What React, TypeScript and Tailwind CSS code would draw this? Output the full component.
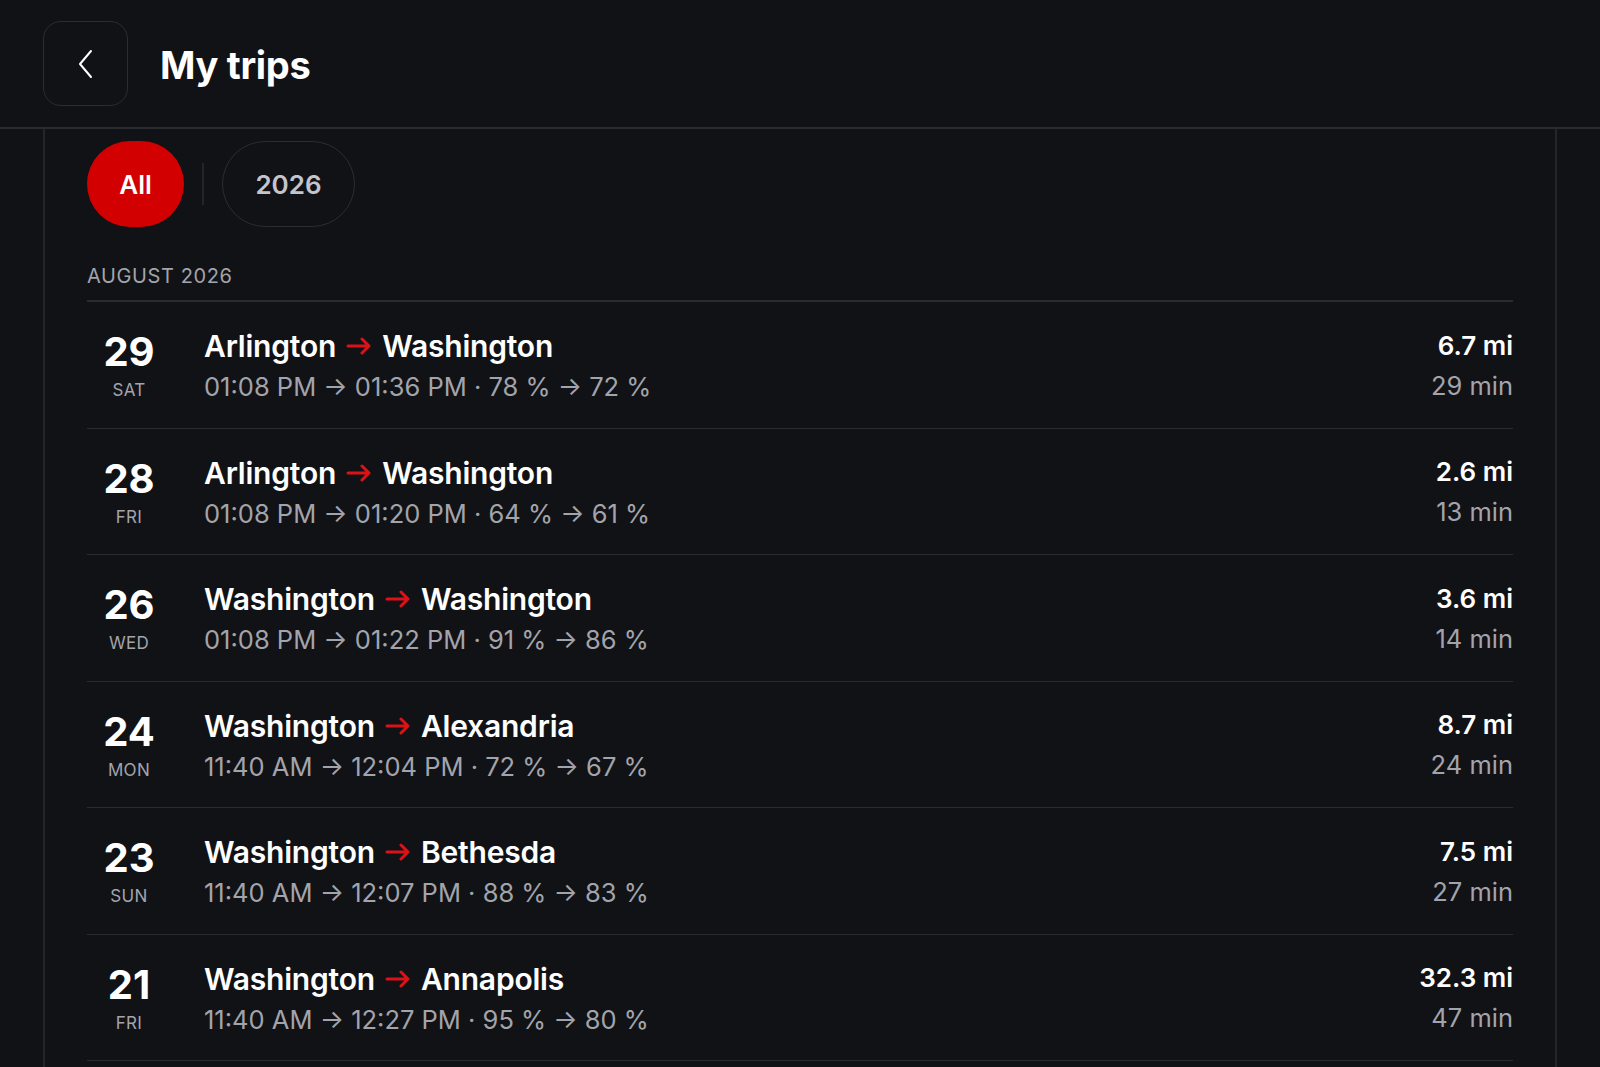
import React from "react";

type Trip = {
  day: string;
  dow: string;
  from: string;
  to: string;
  t1: string;
  t2: string;
  b1: string;
  b2: string;
  dist: string;
  dur: string;
};

const trips: Trip[] = [
  { day: "29", dow: "SAT", from: "Arlington", to: "Washington", t1: "01:08 PM", t2: "01:36 PM", b1: "78 %", b2: "72 %", dist: "6.7 mi", dur: "29 min" },
  { day: "28", dow: "FRI", from: "Arlington", to: "Washington", t1: "01:08 PM", t2: "01:20 PM", b1: "64 %", b2: "61 %", dist: "2.6 mi", dur: "13 min" },
  { day: "26", dow: "WED", from: "Washington", to: "Washington", t1: "01:08 PM", t2: "01:22 PM", b1: "91 %", b2: "86 %", dist: "3.6 mi", dur: "14 min" },
  { day: "24", dow: "MON", from: "Washington", to: "Alexandria", t1: "11:40 AM", t2: "12:04 PM", b1: "72 %", b2: "67 %", dist: "8.7 mi", dur: "24 min" },
  { day: "23", dow: "SUN", from: "Washington", to: "Bethesda", t1: "11:40 AM", t2: "12:07 PM", b1: "88 %", b2: "83 %", dist: "7.5 mi", dur: "27 min" },
  { day: "21", dow: "FRI", from: "Washington", to: "Annapolis", t1: "11:40 AM", t2: "12:27 PM", b1: "95 %", b2: "80 %", dist: "32.3 mi", dur: "47 min" },
];

function RedArrow() {
  return (
    <svg width="26" height="18" viewBox="0 0 26 18" className="mx-[10px] inline-block">
      <path d="M2 9 H23 M16 2 L23 9 L16 16" fill="none" stroke="#dc1219" strokeWidth="3" strokeLinecap="round" strokeLinejoin="round" />
    </svg>
  );
}

function Row({ t }: { t: Trip }) {
  return (
    <div className="flex h-[126.5px] items-center border-b border-[#2a2b30] pt-[2px]">
      <div className="flex w-[84px] flex-col items-center">
        <div className="text-[40px] font-bold leading-[44px] text-white">{t.day}</div>
        <div className="mt-[5px] text-[17px] leading-[22px] tracking-[0.3px] text-[#a3a4ab]">{t.dow}</div>
      </div>
      <div className="ml-[33px] flex flex-1 flex-col">
        <div className="flex items-center text-[30px] font-semibold leading-[38px] tracking-[-0.2px] text-white">
          <span>{t.from}</span>
          <RedArrow />
          <span>{t.to}</span>
        </div>
        <div className="mt-[5px] text-[25.5px] leading-[34px] text-[#a3a4ab]">
          {t.t1} → {t.t2} · {t.b1} → {t.b2}
        </div>
      </div>
      <div className="flex flex-col items-end">
        <div className="text-[26px] font-semibold leading-[34px] text-white">{t.dist}</div>
        <div className="mt-[6px] text-[25.5px] leading-[34px] text-[#a3a4ab]">{t.dur}</div>
      </div>
    </div>
  );
}

export default function App() {
  return (
    <div
      className="h-[1067px] w-full overflow-hidden bg-[#111216]"
      style={{ fontFamily: "Inter, 'Noto Sans', sans-serif" }}
    >
      <header className="flex h-[129px] items-center border-b-2 border-[#2a2b30] px-[43px]">
        <button className="flex h-[85px] w-[85px] items-center justify-center rounded-[18px] border border-[#2c2d33]">
          <svg width="20" height="32" viewBox="0 0 20 32">
            <path d="M15 3 L4 16 L15 29" fill="none" stroke="#ffffff" strokeWidth="2" strokeLinecap="round" strokeLinejoin="round" />
          </svg>
        </button>
        <h1 className="ml-[32px] mt-[3px] text-[38px] font-bold tracking-[-0.3px] text-white">My trips</h1>
      </header>
      <div className="mx-[43px] h-full border-x-2 border-[#24252a] pl-[42px] pr-[42px]">
        <div className="flex items-center pt-[12px]">
          <div className="flex h-[86px] w-[97px] items-center justify-center rounded-full bg-[#d20000] text-[26px] font-semibold text-white">
            All
          </div>
          <div className="mx-[18px] h-[42px] w-[2px] bg-[#24252a]" />
          <div className="flex h-[86px] w-[133px] items-center justify-center rounded-full border border-[#2c2d33] text-[26px] font-semibold text-[#c4c5cc]">
            2026
          </div>
        </div>
        <div className="mt-[36px] border-b-2 border-[#2a2b30] pb-[11px] text-[20px] leading-[26px] tracking-[0.6px] text-[#a3a4ab]">
          AUGUST 2026
        </div>
        {trips.map((t, i) => (
          <Row key={i} t={t} />
        ))}
      </div>
    </div>
  );
}
